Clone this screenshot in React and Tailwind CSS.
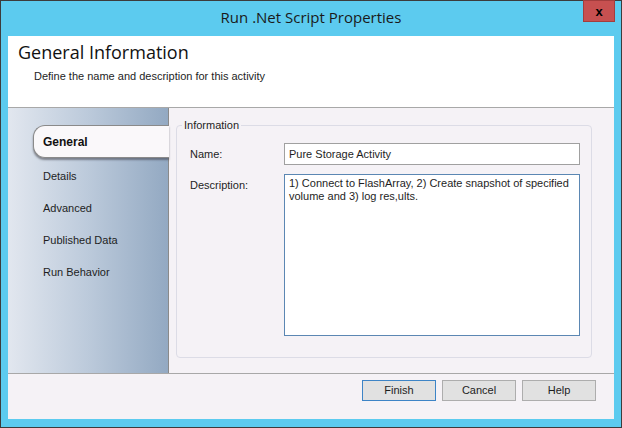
import React from "react";

const tabs = ["Details", "Advanced", "Published Data", "Run Behavior"];

export default function App() {
  return (
    <div className="w-[622px] h-[428px] bg-[#5ccbef] border border-[#3c3c3c] relative flex flex-col font-['Liberation_Sans',Arial,sans-serif] text-[11px] text-[#1e1e1e]">
      {/* title bar */}
      <div className="h-[35px] pb-[3px] flex items-center justify-center text-[15px] text-[#1a1a1a] font-['Open_Sans',sans-serif]">
        Run .Net Script Properties
      </div>
      <div className="absolute -top-px right-[6px] w-[32px] h-[22px] bg-[#c75050] border border-[#a33d3d] flex items-center justify-center text-[13px] font-bold text-black leading-none">
        x
      </div>

      {/* client */}
      <div className="mx-[7px] h-[383px] bg-[#f5f2f6] flex flex-col">
        <div className="h-[72px] bg-white border-b border-[#a8a8a8] pl-[10px] pt-[3px]">
          <div className="text-[18px] text-[#111] font-['Open_Sans',sans-serif]">General Information</div>
          <div className="mt-[2px] pl-[16px] text-[11px]">Define the name and description for this activity</div>
        </div>

        <div className="h-[266px] flex border-b border-[#a8a8a8]">
          <div className="w-[161px] border-r border-[#8a8a8a] bg-gradient-to-r from-[#e2e7ef] via-[#bccadb] to-[#93a9c2] pt-[17px]">
            <div className="ml-[25px] mr-[-1px] h-[33px] bg-[#faf8fa] border border-r-0 border-[#8a8a8a] rounded-l-[12px] shadow-[0_2px_2px_rgba(60,60,70,0.55)] flex items-center pl-[9px] font-bold text-[12px] text-[#111]">
              General
            </div>
            <div className="flex flex-col pl-[35px] mt-[10px]">
              {tabs.map((t) => (
                <div key={t} className="h-[32px] leading-[16px]">
                  {t}
                </div>
              ))}
            </div>
          </div>

          <div className="flex-1 pl-[7px] pr-[22px] pt-[17px] pb-[15px]">
            <div className="relative h-full border border-[#dcdce6] rounded-[4px] pt-[17px] pl-[13px] pr-[11px]">
              <div className="absolute -top-[7px] left-[5px] px-[2px] bg-[#f5f2f6] leading-[13px]">Information</div>
              <div className="flex items-center h-[22px]">
                <div className="w-[94px]">Name:</div>
                <div className="flex-1 h-[22px] bg-white border border-[#a0a0a0] flex items-center pl-[4px]">
                  Pure Storage Activity
                </div>
              </div>
              <div className="flex mt-[9px]">
                <div className="w-[94px] pt-[3px]">Description:</div>
                <div className="flex-1 h-[162px] bg-white border border-[#5b87b3] pl-[4px] pt-[2px] leading-[13px] whitespace-nowrap">
                  <div>1) Connect to FlashArray, 2) Create snapshot of specified</div>
                  <div>volume and 3) log res,ults.</div>
                </div>
              </div>
            </div>
          </div>
        </div>

        <div className="flex-1 flex justify-end items-start pt-[6px] pr-[18px] gap-[6px]">
          <button className="w-[74px] h-[21px] bg-[#e1e1e1] border border-[#3d84c6]">Finish</button>
          <button className="w-[74px] h-[21px] bg-[#e1e1e1] border border-[#adadad]">Cancel</button>
          <button className="w-[74px] h-[21px] bg-[#e1e1e1] border border-[#adadad]">Help</button>
        </div>
      </div>
    </div>
  );
}
